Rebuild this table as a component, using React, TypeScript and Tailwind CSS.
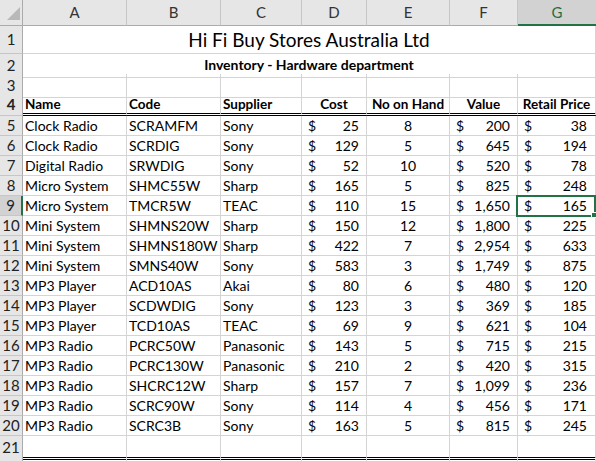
import React from "react";

const COLS = "grid grid-cols-[23px_104px_94px_81px_65px_83px_68px_78px]";
const FONT = { fontFamily: "Lato, 'Open Sans', sans-serif" };

type R = [string, string, string, number, number, string, number];
const data: R[] = [
  ["Clock Radio", "SCRAMFM", "Sony", 25, 8, "200", 38],
  ["Clock Radio", "SCRDIG", "Sony", 129, 5, "645", 194],
  ["Digital Radio", "SRWDIG", "Sony", 52, 10, "520", 78],
  ["Micro System", "SHMC55W", "Sharp", 165, 5, "825", 248],
  ["Micro System", "TMCR5W", "TEAC", 110, 15, "1,650", 165],
  ["Mini System", "SHMNS20W", "Sharp", 150, 12, "1,800", 225],
  ["Mini System", "SHMNS180W", "Sharp", 422, 7, "2,954", 633],
  ["Mini System", "SMNS40W", "Sony", 583, 3, "1,749", 875],
  ["MP3 Player", "ACD10AS", "Akai", 80, 6, "480", 120],
  ["MP3 Player", "SCDWDIG", "Sony", 123, 3, "369", 185],
  ["MP3 Player", "TCD10AS", "TEAC", 69, 9, "621", 104],
  ["MP3 Radio", "PCRC50W", "Panasonic", 143, 5, "715", 215],
  ["MP3 Radio", "PCRC130W", "Panasonic", 210, 2, "420", 315],
  ["MP3 Radio", "SHCRC12W", "Sharp", 157, 7, "1,099", 236],
  ["MP3 Radio", "SCRC90W", "Sony", 114, 4, "456", 171],
  ["MP3 Radio", "SCRC3B", "Sony", 163, 5, "815", 245],
];

const cell = "border-r border-b border-[#d4d4d4] flex items-end pb-[2px] overflow-visible whitespace-nowrap";

function RowHead({ n, sel, extra = "" }: { n?: number; sel?: boolean; extra?: string }) {
  return (
    <div
      className={`flex items-center justify-center text-[15px] border-b border-[#c6c6c6] ${
        sel ? "bg-[#d2d2d2] border-r-2 border-r-[#217346]" : "bg-[#e6e6e6] border-r border-r-[#ababab]"
      } text-[#222] ${extra}`}
    >
      {n}
    </div>
  );
}

function Money({ v, cls = "" }: { v: string | number; cls?: string }) {
  return (
    <div className={`${cell} justify-between pl-[6px] pr-[7px] ${cls}`}>
      <span>$</span>
      <span>{v}</span>
    </div>
  );
}

export default function App() {
  const cols = ["A", "B", "C", "D", "E", "F", "G"];
  const dbl = "border-b-[3px] border-b-black border-double";
  return (
    <div className="relative w-[596px] h-[461px] overflow-hidden bg-white text-black" style={FONT}>
      {/* column headers */}
      <div className={`${COLS} h-[26px]`}>
        <div className="relative bg-[#e6e6e6] border-r border-b border-[#ababab]">
          <svg className="absolute left-[7px] top-[7px]" width="13" height="13" viewBox="0 0 13 13">
            <polygon points="13,0 13,13 0,13" fill="#b9b9b9" />
          </svg>
        </div>
        {cols.map((c) =>
          c === "G" ? (
            <div
              key={c}
              className="flex items-center justify-center text-[15px] bg-[#d2d2d2] text-[#1e6e42] border-b-2 border-[#217346] pt-[1px]"
            >
              {c}
            </div>
          ) : (
            <div
              key={c}
              className="flex items-center justify-center text-[15px] bg-[#e6e6e6] text-[#333] border-r border-r-[#c6c6c6] border-b border-b-[#ababab]"
            >
              {c}
            </div>
          )
        )}
      </div>

      {/* row 1 */}
      <div className={`${COLS} h-[28px]`}>
        <RowHead n={1} />
        <div className="col-span-7 border-r border-b border-[#d4d4d4] flex items-end justify-center text-[19px] leading-none pb-[4px]">
          Hi Fi Buy Stores Australia Ltd
        </div>
      </div>

      {/* row 2 */}
      <div className={`${COLS} h-[20px]`}>
        <RowHead n={2} />
        <div className="col-span-7 border-r border-b border-[#d4d4d4] flex items-center justify-center text-[14px] font-bold leading-none">
          Inventory - Hardware department
        </div>
      </div>

      {/* row 3 */}
      <div className={`${COLS} h-[20px]`}>
        <RowHead n={3} />
        {cols.map((c) => (
          <div key={c} className={cell} />
        ))}
      </div>

      {/* row 4 */}
      <div className={`${COLS} h-[22px] text-[13.5px] font-bold leading-none`}>
        <RowHead n={4} />
        <div className={`${cell} pl-[2px] ${dbl}`}>Name</div>
        <div className={`${cell} pl-[2px] ${dbl}`}>Code</div>
        <div className={`${cell} pl-[2px] ${dbl}`}>Supplier</div>
        <div className={`${cell} justify-center ${dbl}`}>Cost</div>
        <div className={`${cell} justify-center ${dbl}`}>No on Hand</div>
        <div className={`${cell} justify-center ${dbl}`}>Value</div>
        <div className={`${cell} justify-center ${dbl}`}>Retail Price</div>
      </div>

      {/* data rows */}
      {data.map((r, i) => (
        <div key={i} className={`${COLS} h-[20px] text-[14px] leading-none`}>
          <RowHead n={i + 5} sel={i + 5 === 9} />
          <div className={`${cell} pl-[2px]`}>{r[0]}</div>
          <div className={`${cell} pl-[2px]`}>{r[1]}</div>
          <div className={`${cell} pl-[2px]`}>{r[2]}</div>
          <Money v={r[3]} />
          <div className={`${cell} justify-center`}>{r[4]}</div>
          <Money v={r[5]} />
          <Money v={r[6]} cls="pr-[8px]" />
        </div>
      ))}

      {/* row 21 */}
      <div className={`${COLS} h-[23px]`}>
        <RowHead n={21} />
        {cols.map((c) => (
          <div key={c} className={`border-r border-r-[#d4d4d4] ${dbl}`} />
        ))}
      </div>

      {/* row 22 (only a sliver visible) */}
      <div className={`${COLS} h-[20px]`}>
        <RowHead />
        {cols.map((c) => (
          <div key={c} className={cell} />
        ))}
      </div>

      {/* selection G9 */}
      <div className="absolute left-[516px] top-[195px] w-[80px] h-[22px] border-2 border-[#217346] pointer-events-none" />
      <div className="absolute left-[591px] top-[212px] w-[6px] h-[6px] bg-[#217346] border border-white pointer-events-none" />
    </div>
  );
}
